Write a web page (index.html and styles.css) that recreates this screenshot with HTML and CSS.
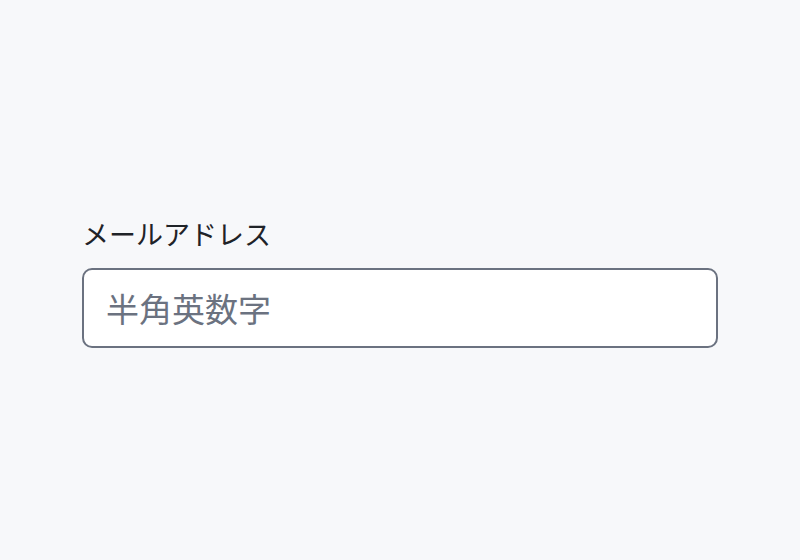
FILE: index.html
```html
<!DOCTYPE html>
<html lang="ja">
<head>
<meta charset="utf-8">
<link rel="stylesheet" href="styles.css">
</head>
<body>
<div class="field">
  <label class="label" for="email">メールアドレス</label>
  <input class="input" id="email" type="text" placeholder="半角英数字">
</div>
</body>
</html>
```
FILE: styles.css
```css
html, body {
  margin: 0;
  padding: 0;
}
body {
  background: #f7f8fa;
  height: 560px;
  display: flex;
  align-items: center;
  justify-content: center;
  font-family: "Noto Sans CJK JP", "Noto Sans", sans-serif;
}
.field {
  width: 636px;
  display: flex;
  flex-direction: column;
  gap: 16px;
  margin-top: 4px;
}
.label {
  font-size: 27px;
  line-height: 36px;
  color: #1f2328;
}
.input {
  box-sizing: border-box;
  width: 100%;
  height: 80px;
  border: 2px solid #6b7280;
  border-radius: 10px;
  background: #ffffff;
  padding: 0 22px;
  font-family: "Noto Sans CJK JP", "Noto Sans", sans-serif;
  font-size: 33px;
  color: #1f2328;
  outline: none;
}
.input::placeholder {
  color: #6b7280;
  opacity: 1;
}
```
